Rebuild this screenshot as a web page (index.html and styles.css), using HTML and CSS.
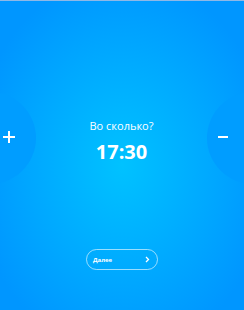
FILE: index.html
```html
<!DOCTYPE html>
<html lang="ru">
<head>
<meta charset="utf-8">
<link rel="stylesheet" href="styles.css">
</head>
<body>
<div class="screen">
  <div class="topline"></div>
  <div class="picker">
    <div class="round round-left"><span class="plus"></span></div>
    <div class="center">
      <div class="question">Во сколько?</div>
      <div class="time">17:30</div>
    </div>
    <div class="round round-right"><span class="minus"></span></div>
  </div>
  <div class="actions">
    <button class="next"><span>Далее</span>
      <svg width="5" height="7" viewBox="0 0 5 7"><path d="M1 1 L3.5 3.5 L1 6" fill="none" stroke="#fff" stroke-width="1.3"/></svg>
    </button>
  </div>
</div>
</body>
</html>
```
FILE: styles.css
```css
html, body { margin: 0; padding: 0; }
body {
  width: 244px;
  height: 310px;
  overflow: hidden;
  font-family: "Open Sans", "Liberation Sans", sans-serif;
}
.screen {
  width: 244px;
  height: 310px;
  background: radial-gradient(ellipse 150px 190px at 122px 165px, #00c2ff 0%, #00a8ff 60%, #0096ff 100%);
  display: flex;
  flex-direction: column;
  overflow: hidden;
}
.topline { height: 1px; background: #8fb8e6; }
.picker {
  margin-top: 91px;
  display: flex;
  align-items: center;
  height: 92px;
}
.round {
  flex: 0 0 92px;
  height: 92px;
  border-radius: 50%;
  background: #009dff;
  display: flex;
  align-items: center;
}
.round-left { margin-left: -56px; justify-content: flex-end; padding-right: 21px; box-sizing: border-box; }
.round-right { margin-right: -55px; justify-content: flex-start; padding-left: 11px; box-sizing: border-box; }
.plus { position: relative; width: 12px; height: 12px; margin-top: -2px; }
.plus::before, .plus::after { content: ""; position: absolute; background: #fff; }
.plus::before { left: 0; top: 5px; width: 12px; height: 2px; }
.plus::after { left: 5px; top: 0; width: 2px; height: 12px; }
.minus { width: 10px; height: 2px; background: #fff; margin-top: -2px; }
.center {
  flex: 1;
  align-self: stretch;
  display: flex;
  flex-direction: column;
  align-items: center;
  padding-top: 27px;
  color: #fff;
}
.question { font-size: 11px; line-height: 14px; }
.time { font-size: 20px; font-weight: 700; line-height: 24px; margin-top: 7px; }
.actions { margin-top: 65px; display: flex; justify-content: center; }
.next {
  width: 72px;
  height: 21px;
  border: 1px solid rgba(255,255,255,0.6);
  border-radius: 11px;
  background: transparent;
  color: #fff;
  font-family: "Open Sans", "Liberation Sans", sans-serif;
  font-size: 6px;
  font-weight: 700;
  display: flex;
  align-items: center;
  justify-content: space-between;
  padding: 0 7px 0 6px;
  box-sizing: border-box;
}
```
